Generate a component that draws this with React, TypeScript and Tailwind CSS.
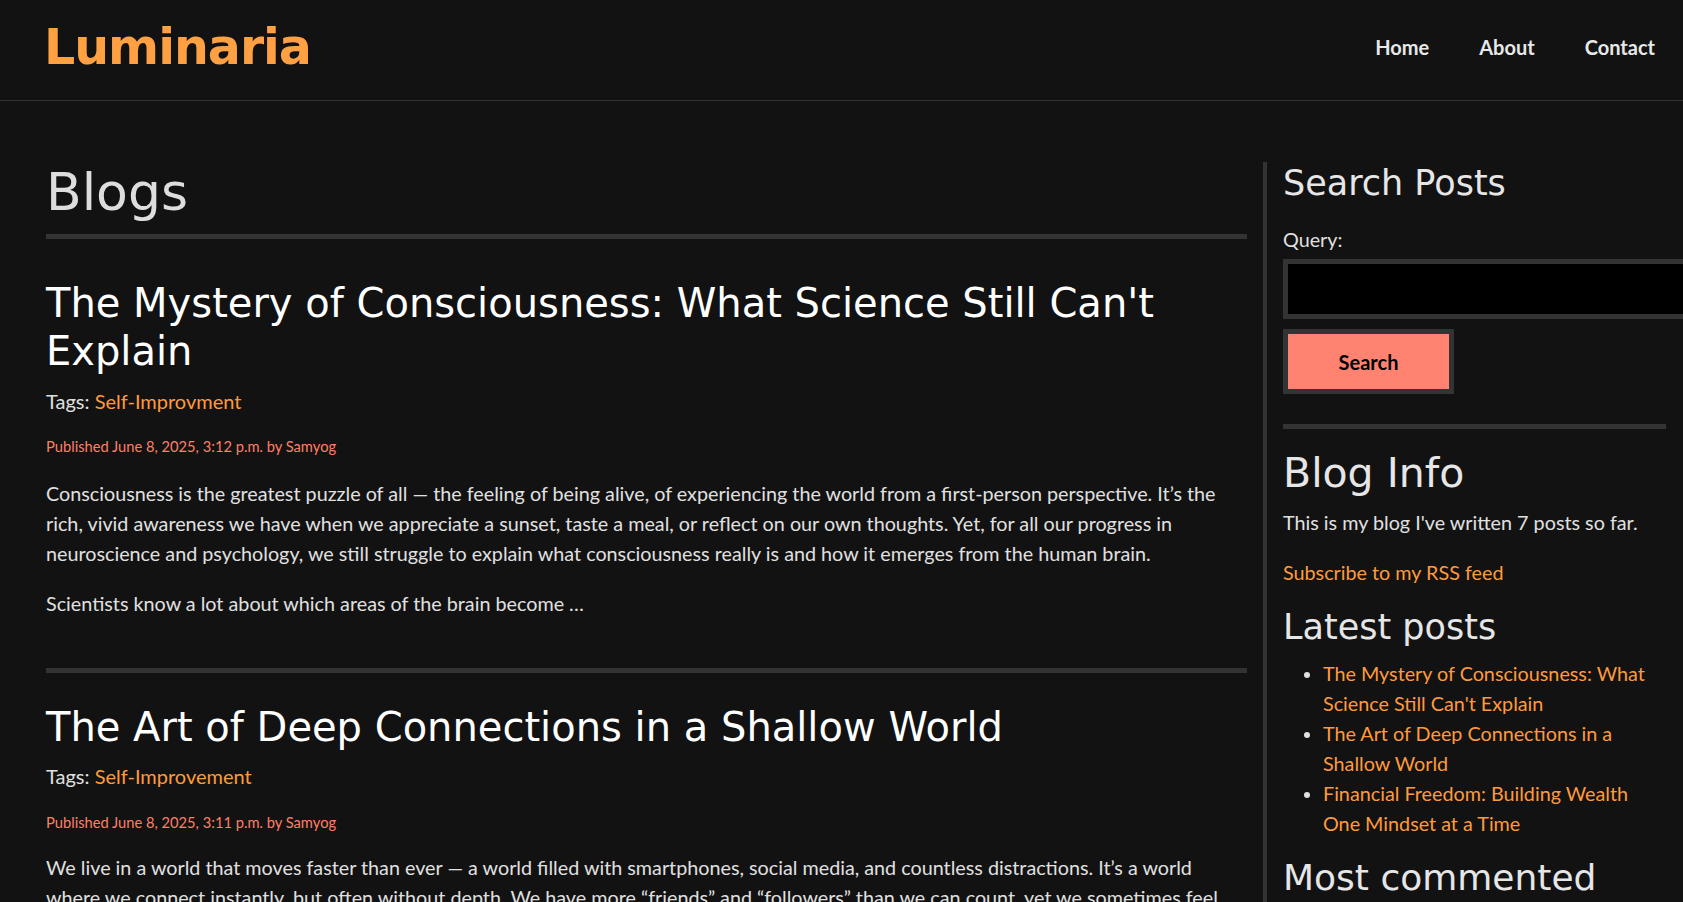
export default function App() {
  const latest = [
    "The Mystery of Consciousness: What Science Still Can't Explain",
    "The Art of Deep Connections in a Shallow World",
    "Financial Freedom: Building Wealth One Mindset at a Time",
  ];
  return (
    <div className="h-[902px] w-full overflow-hidden bg-[#121212] text-[#e0e0e0] font-['Lato',sans-serif] text-[19.75px]">
      <header className="flex h-[101px] items-center justify-between border-b border-[#333] pl-[44px] pr-[28px] pb-[4px]">
        <div className="font-['DejaVu_Sans',sans-serif] text-[49px] font-bold leading-[48px] tracking-[-1px] text-[#ffa142]">
          Luminaria
        </div>
        <nav className="mb-[2px] flex gap-[50px] text-[20px] font-bold leading-[20px] text-[#e8e8e8]">
          <a>Home</a>
          <a>About</a>
          <a>Contact</a>
        </nav>
      </header>

      <div className="flex pt-[61px] pl-[46px]">
        <main className="w-[1201px] shrink-0">
          <h1 className="font-['DejaVu_Sans',sans-serif] text-[52px] leading-[60px] text-[#dddddd]">Blogs</h1>
          <div className="mt-[12px] h-[5px] bg-[#333]" />

          <article>
            <h2 className="mt-[40px] font-['DejaVu_Sans',sans-serif] text-[40px] leading-[48px] text-white">
              The Mystery of Consciousness: What Science Still Can't Explain
            </h2>
            <p className="mt-[11px] text-[20px] leading-[30px]">
              Tags: <a className="text-[#ff9a3c]">Self-Improvment</a>
            </p>
            <p className="mt-[20px] text-[14.7px] leading-[21.6px] text-[#ff7f66]">
              Published June 8, 2025, 3:12 p.m. by Samyog
            </p>
            <p className="mt-[21px] leading-[30px]">
              Consciousness is the greatest puzzle of all — the feeling of being alive, of experiencing the world from a
              first-person perspective. It’s the rich, vivid awareness we have when we appreciate a sunset, taste a meal, or
              reflect on our own thoughts. Yet, for all our progress in neuroscience and psychology, we still struggle to
              explain what consciousness really is and how it emerges from the human brain.
            </p>
            <p className="mt-[20px] leading-[30px]">Scientists know a lot about which areas of the brain become …</p>
          </article>

          <div className="mt-[49px] h-[5px] bg-[#333]" />

          <article>
            <h2 className="mt-[30px] font-['DejaVu_Sans',sans-serif] text-[40px] leading-[48px] text-white">
              The Art of Deep Connections in a Shallow World
            </h2>
            <p className="mt-[10px] text-[20px] leading-[30px]">
              Tags: <a className="text-[#ff9a3c]">Self-Improvement</a>
            </p>
            <p className="mt-[21px] text-[14.7px] leading-[21.6px] text-[#ff7f66]">
              Published June 8, 2025, 3:11 p.m. by Samyog
            </p>
            <p className="mt-[20px] leading-[30px]">
              We live in a world that moves faster than ever — a world filled with smartphones, social media, and countless
              distractions. It’s a world where we connect instantly, but often without depth. We have more “friends” and
              “followers” than we can count, yet we sometimes feel lonelier than ever before. …
            </p>
          </article>
        </main>

        <aside className="ml-[16px] w-[403px] shrink-0 border-l-[4px] border-[#333] pl-[16px]">
          <h2 className="font-['DejaVu_Sans',sans-serif] text-[35px] leading-[42px] text-[#e6e6e6]">Search Posts</h2>
          <label className="mt-[22px] block leading-[27px]">Query:</label>
          <div className="mt-[6px] h-[60px] w-[420px] border-[5px] border-[#333] bg-black" />
          <div className="mt-[10px] flex h-[65px] w-[171px] items-center justify-center border-[5px] border-[#333] bg-[#ff8370] text-[20px] font-bold text-black">
            Search
          </div>
          <div className="mt-[30px] h-[5px] w-[383px] bg-[#333]" />

          <h2 className="mt-[21px] font-['DejaVu_Sans',sans-serif] text-[41px] leading-[47px] text-[#e6e6e6]">Blog Info</h2>
          <p className="mt-[12px] leading-[27px]">This is my blog I've written 7 posts so far.</p>
          <p className="mt-[23px] leading-[27px]">
            <a className="text-[#ff9a3c]">Subscribe to my RSS feed</a>
          </p>

          <h2 className="mt-[20px] font-['DejaVu_Sans',sans-serif] text-[35px] leading-[42px] text-[#e6e6e6]">Latest posts</h2>
          <ul className="mt-[11px] w-[383px] list-disc pl-[40px] leading-[30px]">
            {latest.map((t) => (
              <li key={t}>
                <a className="text-[#ff9a3c]">{t}</a>
              </li>
            ))}
          </ul>

          <h2 className="mt-[17px] font-['DejaVu_Sans',sans-serif] text-[36px] leading-[43px] text-[#e6e6e6]">Most commented</h2>
        </aside>
      </div>
    </div>
  );
}
